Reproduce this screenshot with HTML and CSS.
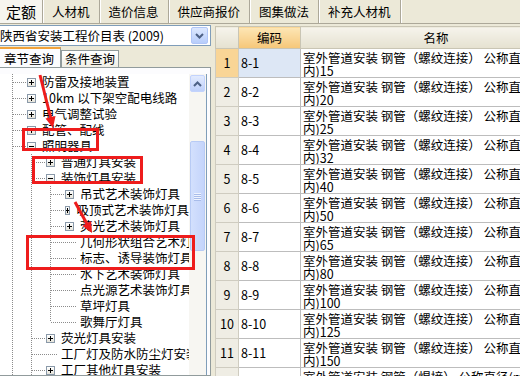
FILE: index.html
```html
<!DOCTYPE html>
<html lang="zh-CN">
<head>
    <meta charset="UTF-8">
    <title>定额查询</title>
    <link rel="stylesheet" href="styles.css">
</head>
<body>
    <!-- 顶部页签 -->
    <div class="topbar">
        <div class="toptab active">定额</div>
        <div class="toptab">人材机</div>
        <div class="toptab">造价信息</div>
        <div class="toptab">供应商报价</div>
        <div class="toptab">图集做法</div>
        <div class="toptab">补充人材机</div>
    </div>

    <div class="main">
        <!-- 左侧：定额库章节 -->
        <div class="side">
            <div class="combo">
                <span class="combo-text">陕西省安装工程价目表 (2009)</span>
                <span class="combo-btn">
                    <svg width="9" height="6" viewBox="0 0 9 6"><path d="M1 1 L4.5 4.5 L8 1" fill="none" stroke="#4d6185" stroke-width="2"/></svg>
                </span>
            </div>
            <div class="subtabs">
                <div class="subtab active">章节查询</div>
                <div class="subtab">条件查询</div>
            </div>
            <div class="page">
                <div class="treectl">
                    <div class="tree">
                        <div class="kids root">
                            <div class="item"><div class="row"><b class="box plus"></b><span>防雷及接地装置</span></div></div>
                            <div class="item"><div class="row"><b class="box plus"></b><span>10km 以下架空配电线路</span></div></div>
                            <div class="item"><div class="row"><b class="box plus"></b><span>电气调整试验</span></div></div>
                            <div class="item"><div class="row"><b class="box plus"></b><span>配管、配线</span></div></div>
                            <div class="item">
                                <div class="row"><b class="box minus"></b><span>照明器具</span></div>
                                <div class="kids more">
                                    <div class="item"><div class="row"><b class="box plus"></b><span>普通灯具安装</span></div></div>
                                    <div class="item">
                                        <div class="row"><b class="box minus"></b><span>装饰灯具安装</span></div>
                                        <div class="kids">
                                            <div class="item"><div class="row"><b class="box plus"></b><span>吊式艺术装饰灯具</span></div></div>
                                            <div class="item"><div class="row"><b class="box plus"></b><span>吸顶式艺术装饰灯具</span></div></div>
                                            <div class="item"><div class="row"><b class="box plus"></b><span>荧光艺术装饰灯具</span></div></div>
                                            <div class="item"><div class="row leaf"><span>几何形状组合艺术灯具</span></div></div>
                                            <div class="item"><div class="row leaf"><span>标志、诱导装饰灯具</span></div></div>
                                            <div class="item"><div class="row leaf"><span>水下艺术装饰灯具</span></div></div>
                                            <div class="item"><div class="row leaf"><span>点光源艺术装饰灯具</span></div></div>
                                            <div class="item"><div class="row leaf"><span>草坪灯具</span></div></div>
                                            <div class="item"><div class="row leaf"><span>歌舞厅灯具</span></div></div>
                                        </div>
                                    </div>
                                    <div class="item"><div class="row"><b class="box plus"></b><span>荧光灯具安装</span></div></div>
                                    <div class="item"><div class="row leaf"><span>工厂灯及防水防尘灯安装</span></div></div>
                                    <div class="item"><div class="row"><b class="box plus"></b><span>工厂其他灯具安装</span></div></div>
                                </div>
                            </div>
                        </div>
                    </div>
                    <div class="vscroll">
                        <div class="sbtn">
                            <svg width="9" height="6" viewBox="0 0 9 6"><path d="M1 5 L4.5 1.5 L8 5" fill="none" stroke="#4d6185" stroke-width="2"/></svg>
                        </div>
                        <div class="track">
                            <div class="thumb"><i></i><i></i><i></i><i></i></div>
                        </div>
                    </div>
                </div>
            </div>
        </div>

        <!-- 右侧：定额子目列表 -->
        <div class="grid">
            <table>
                <colgroup><col class="c-no"><col class="c-code"><col class="c-name"></colgroup>
                <thead>
                    <tr><th class="corner"></th><th class="hot">编码</th><th>名称</th></tr>
                </thead>
                <tbody>
                    <tr class="sel"><td class="no">1</td><td class="code">8-1</td><td class="name">室外管道安装 钢管（螺纹连接） 公称直径(mm以<br>内)15</td></tr>
                    <tr><td class="no">2</td><td class="code">8-2</td><td class="name">室外管道安装 钢管（螺纹连接） 公称直径(mm以<br>内)20</td></tr>
                    <tr><td class="no">3</td><td class="code">8-3</td><td class="name">室外管道安装 钢管（螺纹连接） 公称直径(mm以<br>内)25</td></tr>
                    <tr><td class="no">4</td><td class="code">8-4</td><td class="name">室外管道安装 钢管（螺纹连接） 公称直径(mm以<br>内)32</td></tr>
                    <tr><td class="no">5</td><td class="code">8-5</td><td class="name">室外管道安装 钢管（螺纹连接） 公称直径(mm以<br>内)40</td></tr>
                    <tr><td class="no">6</td><td class="code">8-6</td><td class="name">室外管道安装 钢管（螺纹连接） 公称直径(mm以<br>内)50</td></tr>
                    <tr><td class="no">7</td><td class="code">8-7</td><td class="name">室外管道安装 钢管（螺纹连接） 公称直径(mm以<br>内)65</td></tr>
                    <tr><td class="no">8</td><td class="code">8-8</td><td class="name">室外管道安装 钢管（螺纹连接） 公称直径(mm以<br>内)80</td></tr>
                    <tr><td class="no">9</td><td class="code">8-9</td><td class="name">室外管道安装 钢管（螺纹连接） 公称直径(mm以<br>内)100</td></tr>
                    <tr><td class="no">10</td><td class="code">8-10</td><td class="name">室外管道安装 钢管（螺纹连接） 公称直径(mm以<br>内)125</td></tr>
                    <tr><td class="no">11</td><td class="code">8-11</td><td class="name">室外管道安装 钢管（螺纹连接） 公称直径(mm以<br>内)150</td></tr>
                    <tr><td class="no">12</td><td class="code">8-12</td><td class="name">室外管道安装 钢管（焊接） 公称直径(mm以内)<br>15</td></tr>
                </tbody>
            </table>
        </div>
    </div>

    <!-- 红色标注 -->
    <div class="marks">
        <div class="mark m1"></div>
        <div class="mark m2"></div>
        <div class="mark m3"></div>
        <svg class="arrows" width="520" height="376" viewBox="0 0 520 376">
            <line x1="40" y1="75" x2="51" y2="119" stroke="#ee1c1c" stroke-width="3"/>
            <polygon points="53,128 55.5,116 45.5,118.5" fill="#ee1c1c"/>
            <line x1="75" y1="202" x2="87" y2="224" stroke="#ee1c1c" stroke-width="3"/>
            <polygon points="92,233 91.2,221 82.3,225.8" fill="#ee1c1c"/>
        </svg>
    </div>
</body>
</html>
```

FILE: styles.css
```css
body {
    margin: 0;
    width: 520px;
    height: 376px;
    overflow: hidden;
    position: relative;
    background: #ece9d8;
    color: #000;
    font-family: "Noto Sans CJK SC", "Noto Sans", sans-serif;
    font-size: 12.5px;
}

/* 顶部页签 */
.topbar {
    display: flex;
    height: 23px;
    border-bottom: 1px solid #aca899;
}
.toptab {
    padding: 0 9px;
    line-height: 23px;
    border-right: 1px solid #aca899;
    box-shadow: 1px 0 0 #fff;
}
.toptab.active {
    width: 43px;
    padding: 0;
    box-sizing: border-box;
    text-align: center;
    font-size: 15px;
    background: #f6f5ef;
}

.main {
    display: flex;
    gap: 4px;
    height: 352px;
}

/* 左侧 */
.side {
    width: 211px;
    flex: none;
    display: flex;
    flex-direction: column;
}
.combo {
    margin: 1px 0 0 -5px;
    height: 19px;
    border: 1px solid #7f9db9;
    background: #fff;
    display: flex;
    align-items: center;
    justify-content: space-between;
    padding: 0 2px 0 4px;
}
.combo-text {
    line-height: 19px;
    white-space: nowrap;
}
.combo-btn {
    width: 15px;
    height: 15px;
    border: 1px solid #b1c6f7;
    border-radius: 2px;
    background: linear-gradient(#dde8fe, #b7cdfb);
    display: flex;
    align-items: center;
    justify-content: center;
}

.subtabs {
    display: flex;
    align-items: flex-end;
    height: 20px;
    margin-top: 1px;
}
.subtab {
    height: 16px;
    line-height: 16px;
    padding: 0 3px;
    border: 1px solid #919b9c;
    border-bottom: none;
    background: linear-gradient(#fff, #f1efe6);
}
.subtab.active {
    height: 18px;
    line-height: 19px;
    margin-left: -1px;
    padding: 0 6px 0 4px;
    border-top: 2px solid #f2a33a;
    background: #fcfcfe;
    position: relative;
    z-index: 1;
}

.page {
    flex: 1;
    min-height: 0;
    border: 1px solid #919b9c;
    border-left: none;
    margin-left: -1px;
    background: #fcfcfe;
    padding: 6px 3px 0 0;
}
.treectl {
    height: 100%;
    display: flex;
    background: #fff;
    border-right: 1px solid #7f9db9;
}
.tree {
    flex: 1;
    overflow: hidden;
    white-space: nowrap;
}

/* 树节点与虚线 */
.kids {
    margin-left: 19px;
}
.kids.root {
    margin-left: 13px;
}
.item {
    background: repeating-linear-gradient(to bottom, #8c8c8c 0 1px, transparent 1px 2px) 0 0 / 1px 100% no-repeat;
}
.item:last-child {
    background-size: 1px 8px;
}
.root > .item:last-child,
.more > .item:last-child {
    background-size: 1px 100%;
}
.row {
    height: 16px;
    display: flex;
    align-items: center;
    padding-left: 15px;
    background: repeating-linear-gradient(to right, #8c8c8c 0 1px, transparent 1px 2px) 1px 8px / 14px 1px no-repeat;
}
.row.leaf {
    padding-left: 29px;
    background-size: 26px 1px;
}
.row span {
    line-height: 16px;
    padding-left: 1px;
}
.box {
    width: 7px;
    height: 7px;
    margin-right: 5px;
    border: 1px solid #8a99a9;
    background: linear-gradient(#000, #000) center / 5px 1px no-repeat,
                linear-gradient(#fff, #e6e4da);
}
.box.plus {
    background: linear-gradient(#000, #000) center / 5px 1px no-repeat,
                linear-gradient(#000, #000) center / 1px 5px no-repeat,
                linear-gradient(#fff, #e6e4da);
}

/* 滚动条 */
.vscroll {
    width: 17px;
    flex: none;
    display: flex;
    flex-direction: column;
    background: #f7f6f2;
}
.sbtn {
    height: 15px;
    margin: 1px 1px 0;
    border: 1px solid #c3d3fd;
    border-radius: 2px;
    background: linear-gradient(#e3ebfe, #bed0fa);
    display: flex;
    align-items: center;
    justify-content: center;
}
.track {
    flex: 1;
    padding-top: 49px;
}
.thumb {
    height: 108px;
    margin: 0 1px;
    border: 1px solid #b8cbf5;
    border-radius: 2px;
    background: linear-gradient(to right, #d3e0fd, #c4d4fb);
    display: flex;
    flex-direction: column;
    align-items: center;
    justify-content: center;
    gap: 1px;
}
.thumb i {
    width: 7px;
    height: 1px;
    background: #eef3fe;
    box-shadow: 0 1px 0 #a8bcea;
}

/* 右侧表格 */
.grid {
    flex: 1;
    overflow: hidden;
    margin-top: 2px;
    background: #fff;
}
table {
    border-collapse: collapse;
    table-layout: fixed;
    width: 356px;
}
.c-no { width: 23px; }
.c-code { width: 62px; }
.c-name { width: 271px; }
th, td {
    border: 1px solid #bdbdbd;
    padding: 0;
    font-weight: normal;
}
thead tr {
    height: 22px;
}
tbody tr {
    height: 29px;
}
th {
    line-height: 20px;
    text-align: center;
    background: linear-gradient(#f6f4ec, #e5e1d0);
    border-color: #c9c5b4;
}
th.hot {
    background: linear-gradient(#fde6b6, #f6c778);
}
td {
    line-height: 16px;
}
td.no {
    text-align: center;
    background: #efede4;
    border-color: #cfccc0;
}
tr.sel td.no {
    background: #f9d596;
}
td.code {
    padding-left: 2px;
}
tr.sel td.code {
    background: #dde7f5;
}
td.name {
    vertical-align: top;
    padding: 3px 0 0 2px;
    line-height: 12.5px;
    white-space: nowrap;
    overflow: hidden;
}

/* 红色标注层 */
.marks {
    position: absolute;
    inset: 0;
    pointer-events: none;
}
.mark {
    position: absolute;
    border: 3px solid #ee1c1c;
}
.m1 { left: 22px; top: 128px; width: 71px; height: 17px; }
.m2 { left: 32px; top: 156px; width: 105px; height: 22px; }
.m3 { left: 26px; top: 235px; width: 163px; height: 29px; }
.arrows {
    position: absolute;
    left: 0;
    top: 0;
}
```
